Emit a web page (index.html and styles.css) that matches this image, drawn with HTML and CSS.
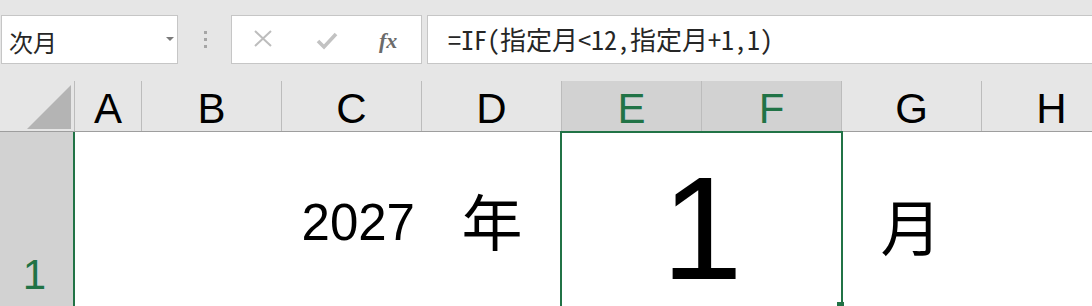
FILE: index.html
```html
<!DOCTYPE html>
<html lang="ja">
<head>
<meta charset="utf-8">
<title>Excel</title>
<link rel="stylesheet" href="styles.css">
</head>
<body>
<div class="app">
  <div class="toolbar">
    <div class="namebox">
      <span class="name">次月</span>
      <span class="caret"></span>
    </div>
    <div class="grip"><i></i><i></i><i></i></div>
    <div class="btnbox">
      <svg class="ico" width="20" height="20" viewBox="0 0 20 20"><path d="M2 2 L18 17 M18 2 L2 17" stroke="#bdbdbd" stroke-width="2" fill="none"/></svg>
      <svg class="ico" width="22" height="18" viewBox="0 0 22 18"><path d="M2 9 L8 15 L20 2" stroke="#c2c2c2" stroke-width="3.6" fill="none"/></svg>
      <span class="fx">fx</span>
    </div>
    <div class="formula">=IF(指定月&lt;12,指定月+1,1)</div>
  </div>

  <div class="headers">
    <div class="corner"><span class="tri"></span></div>
    <div class="col col-a">A</div>
    <div class="col">B</div>
    <div class="col">C</div>
    <div class="col">D</div>
    <div class="col sel">E</div>
    <div class="col sel">F</div>
    <div class="col">G</div>
    <div class="col">H</div>
  </div>

  <div class="row">
    <div class="rowhead">1</div>
    <div class="cell col-a"></div>
    <div class="cell"></div>
    <div class="cell year">2027</div>
    <div class="cell kanji nen">年</div>
    <div class="cell merged month">1</div>
    <div class="cell kanji tsuki">月</div>
    <div class="cell"></div>
  </div>

  <div class="selection"></div>
  <div class="handle"></div>
</div>
</body>
</html>
```

FILE: styles.css
```css
html, body {
  margin: 0;
  padding: 0;
}
body {
  background: #e6e6e6;
  width: 1092px;
  height: 306px;
  overflow: hidden;
}
.app {
  position: relative;
  width: 1092px;
  height: 306px;
  overflow: hidden;
}

/* toolbar */
.toolbar {
  height: 81px;
  display: flex;
  align-items: flex-start;
  padding-top: 15px;
  box-sizing: border-box;
}
.namebox {
  margin-left: 1px;
  width: 177px;
  height: 49px;
  box-sizing: border-box;
  border: 1px solid #c6c6c6;
  background: #fff;
  display: flex;
  align-items: center;
  position: relative;
}
.name {
  font-family: "Noto Sans CJK JP", sans-serif;
  font-size: 24px;
  color: #262626;
  padding-left: 7px;
  padding-top: 4px;
  line-height: 1;
}
.caret {
  position: absolute;
  left: 164px;
  top: 21px;
  width: 0;
  height: 0;
  border-left: 4px solid transparent;
  border-right: 4px solid transparent;
  border-top: 4px solid #7a7a7a;
}
.grip {
  width: 53px;
  height: 49px;
  display: flex;
  flex-direction: column;
  align-items: center;
  justify-content: flex-start;
  gap: 4px;
  padding-top: 16px;
  box-sizing: border-box;
}
.grip i {
  display: block;
  width: 3px;
  height: 3px;
  background: #a6a6a6;
  margin-left: 1px;
}
.btnbox {
  width: 191px;
  height: 49px;
  box-sizing: border-box;
  border: 1px solid #c6c6c6;
  background: #fff;
  display: flex;
  align-items: center;
  padding-left: 21px;
}
.btnbox .ico:nth-child(1) {
  margin-top: -2px;
}
.btnbox .ico:nth-child(2) {
  margin-left: 43px;
  margin-top: 2px;
}
.fx {
  font-family: "Liberation Serif", serif;
  font-style: italic;
  font-weight: bold;
  font-size: 22px;
  color: #6b6b6b;
  margin-left: 41px;
  margin-top: 3px;
}
.formula {
  margin-left: 5px;
  flex: 1;
  height: 49px;
  box-sizing: border-box;
  border: 1px solid #c6c6c6;
  margin-right: -4px;
  background: #fff;
  font-family: "Noto Sans CJK JP", sans-serif;
  font-feature-settings: "hwid";
  font-size: 26px;
  color: #262626;
  line-height: 46px;
  padding-left: 20px;
  white-space: nowrap;
}

/* column headers */
.headers {
  display: flex;
  height: 51px;
  box-sizing: border-box;
  border-bottom: 1px solid #9e9e9e;
}
.corner {
  width: 75px;
  flex: none;
  box-sizing: border-box;
  border-right: 1px solid #bcbcbc;
  position: relative;
}
.tri {
  position: absolute;
  left: 27px;
  top: 4px;
  width: 0;
  height: 0;
  border-left: 44px solid transparent;
  border-bottom: 44px solid #b4b4b4;
}
.col {
  width: 140px;
  flex: none;
  box-sizing: border-box;
  border-right: 1px solid #bcbcbc;
  font-family: "Liberation Sans", Arial, sans-serif;
  font-size: 42px;
  line-height: 44px;
  padding-top: 6px;
  text-align: center;
  color: #000;
}
.col-a {
  width: 67px;
}
.col.sel {
  background: #d2d2d2;
  color: #217346;
}

/* row 1 */
.row {
  display: flex;
  height: 175px;
}
.rowhead {
  width: 75px;
  flex: none;
  box-sizing: border-box;
  background: #d2d2d2;
  border-right: 2px solid #217346;
  font-family: "Liberation Sans", Arial, sans-serif;
  font-size: 42px;
  color: #217346;
  text-align: center;
  line-height: 44px;
  padding-top: 121px;
  padding-right: 4px;
}
.cell {
  width: 140px;
  flex: none;
  background: #fff;
  box-sizing: border-box;
}
.cell.col-a {
  width: 67px;
}
.year {
  font-family: "Liberation Sans", Arial, sans-serif;
  font-size: 51px;
  line-height: 51px;
  text-align: right;
  padding-right: 7px;
  padding-top: 65px;
}
.kanji {
  font-family: "Noto Sans CJK JP", sans-serif;
  font-size: 61px;
  line-height: 61px;
  text-align: center;
}
.nen {
  padding-top: 57px;
}
.tsuki {
  padding-top: 62px;
  padding-right: 2px;
}
.merged {
  width: 280px;
}
.month {
  font-family: "Liberation Sans", Arial, sans-serif;
  font-size: 146px;
  line-height: 146px;
  text-align: center;
  padding-top: 24px;
}

/* selection overlay */
.selection {
  position: absolute;
  left: 560px;
  top: 131px;
  width: 283px;
  height: 200px;
  box-sizing: border-box;
  border: 2px solid #217346;
}
.handle {
  position: absolute;
  left: 837px;
  top: 302px;
  width: 7px;
  height: 7px;
  background: #217346;
}
```
